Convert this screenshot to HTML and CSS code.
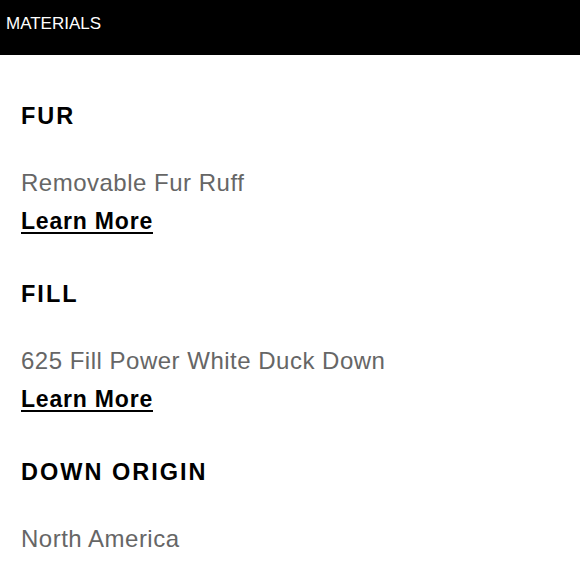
FILE: index.html
```html
<!DOCTYPE html>
<html lang="en">
<head>
<meta charset="utf-8">
<title>Materials</title>
<link rel="stylesheet" href="styles.css">
</head>
<body>
<header class="bar">MATERIALS</header>
<main class="list">
  <section class="group">
    <h2 class="title">FUR</h2>
    <p class="value">Removable Fur Ruff</p>
    <a class="more" href="#">Learn More</a>
  </section>
  <section class="group">
    <h2 class="title">FILL</h2>
    <p class="value">625 Fill Power White Duck Down</p>
    <a class="more" href="#">Learn More</a>
  </section>
  <section class="group">
    <h2 class="title">DOWN ORIGIN</h2>
    <p class="value">North America</p>
  </section>
</main>
</body>
</html>
```
FILE: styles.css
```css
html, body {
  margin: 0;
  padding: 0;
  background: #fff;
  font-family: "Liberation Sans", Arial, sans-serif;
}
.bar {
  height: 55px;
  background: #000;
  color: #fff;
  font-size: 17px;
  line-height: 20px;
  padding: 14px 0 0 6px;
  box-sizing: border-box;
}
.list {
  padding: 0 21px;
}
.group {
  display: flex;
  flex-direction: column;
  align-items: flex-start;
  padding-top: 47px;
}
.group + .group {
  padding-top: 45px;
}
.title {
  margin: 0;
  font-size: 23.5px;
  line-height: 28px;
  font-weight: bold;
  letter-spacing: 2px;
  color: #000;
}
.value {
  margin: 39px 0 0;
  font-size: 24px;
  line-height: 28px;
  letter-spacing: 0.5px;
  color: #666;
}
.more {
  margin-top: 10px;
  font-size: 23px;
  line-height: 28px;
  font-weight: bold;
  letter-spacing: 0.8px;
  color: #000;
  text-decoration: underline;
  text-decoration-thickness: 2px;
  text-underline-offset: 3px;
}
```
